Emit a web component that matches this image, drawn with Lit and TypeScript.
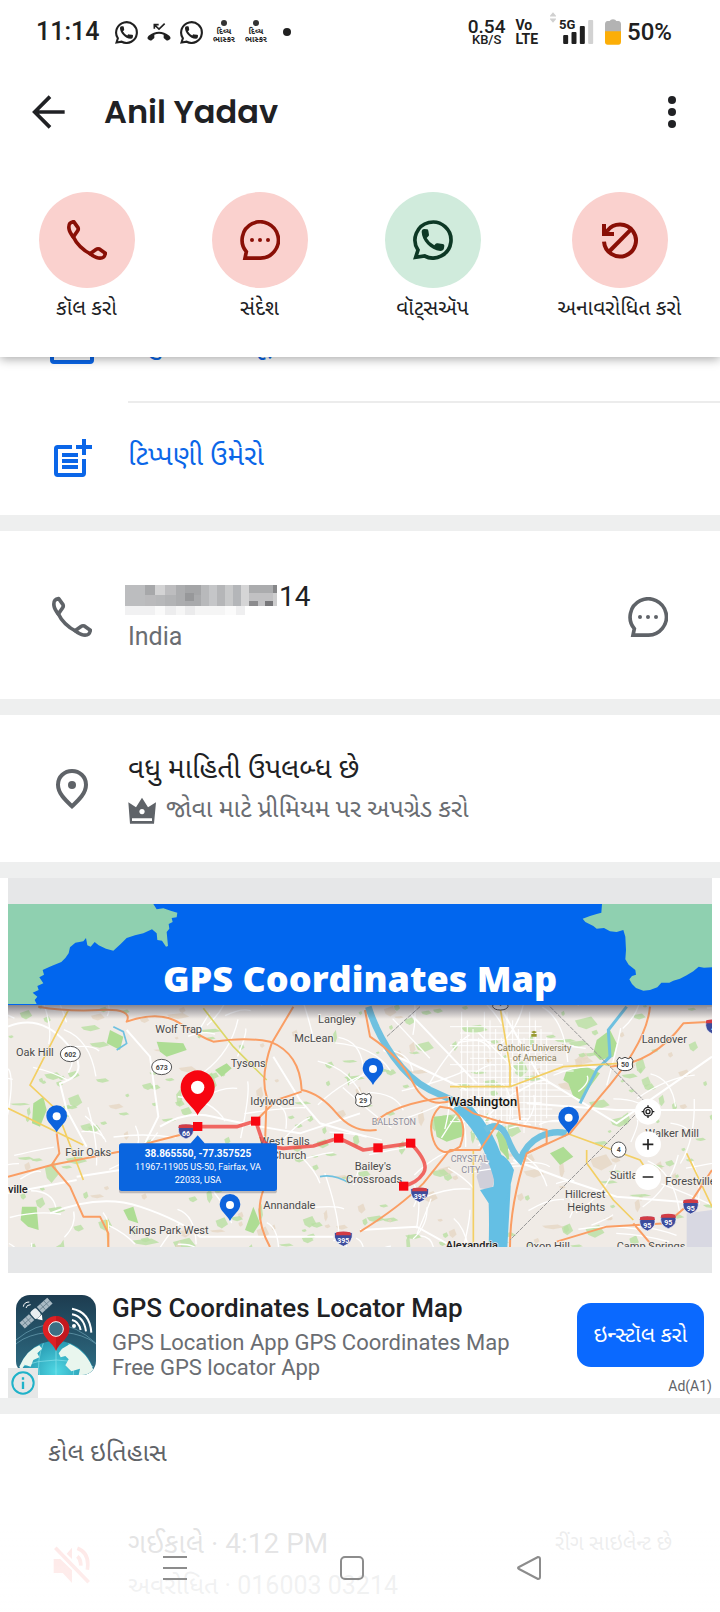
import { LitElement, html, css, svg } from "lit";
import { customElement } from "lit/decorators.js";

/* ---------- icons ---------- */

const phoneIcon = html`<svg viewBox="0 0 120 120" aria-hidden="true" fill="none" stroke="currentColor" stroke-width="11" stroke-linejoin="round">
  <path d="M6 26C4 12 8 7 20 5L33 23Q35 28 32 32L19 51C12 42 7 34 6 26Z" />
  <path d="M94 114C108 116 113 112 115 100L97 87Q92 85 88 88L69 101C78 108 86 113 94 114Z" />
  <path d="M17 47C28 70 50 92 73 103" />
</svg>`;

const messageIcon = html`<svg viewBox="0 0 120 120" aria-hidden="true" fill="none" stroke="currentColor" stroke-width="11">
  <path d="M60 114.500H15L19 95A54.500 54.500 0 1 1 60 114.500Z" />
  <g fill="currentColor" stroke="none"><circle cx="36" cy="60" r="6" /><circle cx="60" cy="60" r="6" /><circle cx="84" cy="60" r="6" /></g>
</svg>`;

const whatsappIcon = html`<svg viewBox="0 0 120 120" aria-hidden="true">
  <path d="M8 112L15 90A54 54 0 1 1 35 108Z" fill="none" stroke="currentColor" stroke-width="11" />
  <path d="M26 36Q26 27 34 27L42 28Q45 28 46 32L48 44Q48 47 46 49L41 54Q48 67 64 76L68 71Q70 69 74 70L89 72Q94 73 94 77L93 85Q91 93 82 93C52 90 27 62 26 36Z" fill="currentColor" />
</svg>`;

const unblockIcon = html`<svg viewBox="0 0 120 120" aria-hidden="true">
  <g fill="none" stroke="currentColor" stroke-width="12"><path d="M12 65A48 48 0 1 0 22 32" /><path d="M96 25L29 93" /></g>
  <path d="M6 12H18V28L28 36H42V48H6Z" fill="currentColor" />
</svg>`;

const noteIcon = html`<svg viewBox="150 261 132 132" aria-hidden="true" fill="none" stroke="currentColor" stroke-width="12">
  <path d="M216 291H173Q168 291 168 296V370Q168 375 173 375H247Q252 375 252 370V327" />
  <path d="M186 315H234M186 333H234M186 351H234M252 267V315M228 291H276" />
</svg>`;

const boxIcon = html`<svg viewBox="0 0 132 108" aria-hidden="true" fill="none" stroke="currentColor" stroke-width="12">
  <rect x="6" y="6" width="120" height="96" rx="6" />
</svg>`;

const placeIcon = html`<svg viewBox="156 174 120 126" aria-hidden="true">
  <path d="M216 183C238 183 258 200 258 224C258 250 236 270 216 289C196 270 174 250 174 224C174 200 194 183 216 183Z" fill="none" stroke="currentColor" stroke-width="12" />
  <circle cx="216" cy="225" r="12" fill="currentColor" />
</svg>`;

const crownIcon = html`<svg viewBox="390 260 84 84" aria-hidden="true">
  <path fill="currentColor" fill-rule="evenodd" d="M391 276L414 291L432 262L450 291L474 276L468 340H396ZM402 324V332H462V324ZM432 296A8 8 0 1 0 432.100 296Z" />
</svg>`;

const mutedIcon = html`<svg viewBox="0 0 120 120" aria-hidden="true" fill="none" stroke="currentColor" stroke-width="11">
  <path fill="currentColor" stroke="none" d="M5 42H25L60 76V114L32 84H5ZM60 8V42L44 26Z" />
  <path d="M10 8L110 112M76 34Q88 44 86 62M76 10Q114 24 106 74" />
</svg>`;

const missedCallIcon = html`<svg viewBox="0 0 72 54" aria-hidden="true">
  <path d="M2 48Q0 42 5 38Q36 14 67 38Q72 42 70 48L64 52Q60 54 57 51L50 45V35Q36 30 22 35V45L15 51Q12 54 8 52Z" fill="currentColor" />
  <path d="M22 17V5H35M23 6L36 18L53 2" fill="none" stroke="currentColor" stroke-width="5" />
</svg>`;

const signalIcon = html`<svg viewBox="0 0 92 78" aria-hidden="true">
  <g fill="#202020"><rect y="48" width="15" height="27" rx="3" /><rect x="25" y="39" width="15" height="36" rx="3" /><rect x="50" y="21" width="15" height="54" rx="3" /></g>
  <rect x="75" y="3" width="15" height="72" rx="3" fill="#d2d2d2" />
</svg>`;

const arrowsIcon = html`<svg viewBox="0 0 18 32" aria-hidden="true" fill="#d0d0d0"><path d="M9 0L18 11V13H0V11ZM9 32L18 21V19H0V21Z" /></svg>`;

const batteryIcon = html`<svg viewBox="0 0 48 78" aria-hidden="true">
  <path d="M14 6Q16 1 24 1Q32 1 34 6H40Q48 7 48 16V40H0V16Q0 7 8 6Z" fill="#b3b3b3" />
  <path d="M0 37H48V68Q48 77 40 77H8Q0 77 0 68Z" fill="#fcae07" />
</svg>`;

/* ---------- map artwork ---------- */

function random(seed: number) {
  let s = seed;
  return () => {
    s = (s * 16807) % 2147483647;
    return s / 2147483647;
  };
}

function patches() {
  const r = random(77);
  const out = [];
  for (let i = 0; i < 300; i++) {
    const x = 24 + r() * 2112;
    const y = 405 + r() * 726;
    const w = 8 + r() * r() * 55;
    const h = 6 + r() * r() * 44;
    const tint = r() > 0.3 ? "#b9e0a2" : "#e6d7c4";
    out.push(svg`<path fill=${tint} opacity=".8" d="M${x} ${y}l${w} ${-h * 0.4}l${w * 0.4} ${h * 0.8}l${-w * 0.7} ${h * 0.5}l${-w * 0.5} ${-h * 0.3}z" />`);
  }
  return out;
}

function streets() {
  const r = random(4242);
  const out = [];
  for (let i = 0; i < 130; i++) {
    const x = 24 + r() * 2112;
    const y = 405 + r() * 726;
    const a = r() * 6.28;
    const l = 50 + r() * 150;
    const dx = Math.cos(a) * l;
    const dy = Math.sin(a) * l;
    out.push(svg`<path d="M${x} ${y}q${dx * 0.6 + 20} ${dy * 0.3 - 14} ${dx} ${dy}" />`);
  }
  return out;
}

function downtown() {
  const out = [];
  for (let i = 0; i < 16; i++) {
    out.push(svg`<path d="M${1385 + i * 17} ${425 + (i % 4) * 26}V${745 + (i % 3) * 22}" />`);
    out.push(svg`<path d="M${1350 + (i % 3) * 30} ${470 + i * 19}H${1625 + (i % 4) * 32}" />`);
  }
  return out;
}

const bluePin = (x: number, y: number) => svg`<g transform="translate(${x} ${y})">
  <path d="M0 0C-10 -20 -31 -30 -31 -50A31 31 0 0 1 31 -50C31 -30 10 -20 0 0Z" fill="#0d63dd" /><circle cy="-48" r="12" fill="#fff" /></g>`;

const interstate = (x: number, y: number, n: string) => svg`<g transform="translate(${x} ${y})">
  <path d="M-${n.length > 2 ? 27 : 21} -18Q0 -24 ${n.length > 2 ? 27 : 21} -18Q30 12 0 23Q-30 12 -${n.length > 2 ? 27 : 21} -18Z" fill="#3d4c9c" stroke="#fff" stroke-width="2" />
  <path d="M-21 -19Q0 -24 21 -19L23 -10H-23Z" fill="#d23c45" />
  <text class="shield light" y="13">${n}</text></g>`;

const route = (x: number, y: number, n: string, rx = 30) => svg`<g transform="translate(${x} ${y})">
  <ellipse rx=${rx} ry="23" fill="#fff" stroke="#555" stroke-width="3" /><text class="shield" y="8">${n}</text></g>`;

const highway = (x: number, y: number, n: string) => svg`<g transform="translate(${x} ${y})">
  <path d="M-18 -20L-10 -16L0 -20L10 -16L18 -20L24 -10Q20 0 23 10Q18 20 0 20Q-18 20 -23 10Q-20 0 -24 -10Z" fill="#fff" stroke="#444" stroke-width="3" /><text class="shield" y="9">${n}</text></g>`;

const places: [number, number, string, string?][] = [
  [466, 490, "Wolf Trap"], [48, 557, "Oak Hill"], [954, 459, "Langley"], [883, 517, "McLean"],
  [692, 591, "Tysons"], [751, 705, "Idylwood"], [196, 858, "Fair Oaks"], [778, 825, "West Falls"],
  [815, 866, "Church"], [790, 1017, "Annandale"], [386, 1093, "Kings Park West"],
  [1064, 901, "Bailey's"], [1038, 940, "Crossroads"], [1925, 518, "Landover"],
  [1936, 800, "Walker Mill"], [1830, 927, "Suitland"], [1996, 945, "Forestville"],
  [1695, 984, "Hillcrest"], [1702, 1023, "Heights"], [1578, 1141, "Oxon Hill"], [1850, 1141, "Camp Springs"],
  [24, 968, "ville", "strong"], [1345, 707, "Washington", "city"], [1337, 1136, "Alexandria", "strong"],
  [1115, 766, "BALLSTON", "area"], [1352, 877, "CRYSTAL", "area"], [1384, 908, "CITY", "area"],
  [1491, 542, "Catholic University", "poi"], [1538, 574, "of America", "poi"],
];

@customElement("ad-map")
class AdMap extends LitElement {
  static styles = css`
    :host { display: block; background: #e6e7e8; }
    svg { display: block; width: 100%; height: auto; }
    text { font-family: Roboto, sans-serif; fill: #4a4a4a; }
    .place { font-size: 33px; stroke: #f5f1ec; stroke-width: 4px; paint-order: stroke; }
    .strong { font-weight: 500; fill: #222; }
    .city { font-size: 39px; font-weight: 500; fill: #111; }
    .area { font-size: 27px; fill: #8d8d9b; }
    .poi { font-size: 27px; fill: #857a55; }
    .shield { font-size: 21px; font-weight: 700; text-anchor: middle; }
    .light { fill: #fff; }
    .headline { font-family: "Open Sans", sans-serif; font-size: 108px; font-weight: 800; fill: #fff; text-anchor: middle; }
    .tip { font-size: 27px; fill: #fff; text-anchor: middle; }
    .coords { font-size: 30px; font-weight: 700; }
  `;

  render() {
    return html`<svg viewBox="24 24 2112 1185" role="img" aria-label="GPS Coordinates Map">
      <defs>
        <clipPath id="area"><rect x="24" y="405" width="2112" height="726" /></clipPath>
        <linearGradient id="shade" x1="0" y1="0" x2="0" y2="1"><stop offset="0" stop-color="#334" stop-opacity=".55" /><stop offset="1" stop-color="#334" stop-opacity="0" /></linearGradient>
      </defs>
      <g clip-path="url(#area)">
        <rect x="24" y="405" width="2112" height="726" fill="#f0ebe6" />
        ${patches()}
        <g fill="#aedd94">
          <path d="M1700 600L1760 590L1800 610L1770 650L1745 690L1720 680L1705 640L1690 630Z" />
          <path d="M1790 510L1830 480L1850 520L1840 560L1800 570L1780 550Z" />
          <path d="M100 700L130 680L140 720L120 770L96 760Z" /><path d="M66 1010L110 1010L116 1080L84 1070L62 1050Z" />
          <path d="M1300 740L1350 735L1390 760L1385 800L1340 815L1310 800Z" /><path d="M1490 790Q1520 800 1528 870L1500 840Z" />
          <path d="M1650 850L1690 830L1720 860L1680 885Z" /><path d="M760 1010L780 1060L760 1090L735 1080Z" />
          <path d="M645 600L680 580L695 595L665 620Z" /><path d="M330 480L370 500L360 540L320 520Z" />
          <path d="M470 515L550 520L560 540L500 560L480 545Z" /><path d="M370 1020L400 1010L415 1060L385 1050Z" />
        </g>
        <path d="M2060 1030L2136 1020V1131H2060Z" fill="#d8d8e2" /><path d="M1450 850L1480 860L1485 920L1475 960L1440 955L1430 920Z" fill="#d0cfd9" />
        <g fill="none" stroke="#fff" stroke-width="4">${streets()}</g>
        <g fill="none" stroke="#fff" stroke-width="3">${downtown()}</g>
        <g fill="none" stroke="#fff" stroke-width="6">
          <path d="M24 470Q120 430 200 520T180 640L200 720L260 830" /><path d="M380 480L450 560L475 740L430 830" />
          <path d="M150 1030Q300 970 420 1010T600 1100H1000" /><path d="M480 770Q560 720 640 740T900 790L1080 730" />
          <path d="M230 920L360 900M24 970L230 930" /><path d="M820 560L900 690L960 760L1100 800" />
          <path d="M1080 1080L1250 1070L1340 1120" /><path d="M1580 700L1850 720H2136" /><path d="M1540 870L1700 930L1850 980L2100 1000" />
          <path d="M1500 410L1620 620L1850 760L2136 560" /><path d="M1230 430L1430 640M1150 540L1400 660" />
        </g>
        <g fill="none" stroke="#6fc1e0">
          <path d="M1105 410Q1130 490 1180 560T1290 660L1400 710" stroke-width="20" />
          <path d="M1375 700Q1440 760 1470 830T1510 950L1500 1131" stroke-width="44" stroke="#64bfe4" />
          <path d="M1455 780Q1500 750 1520 800T1560 870Q1580 820 1620 800T1700 790" stroke-width="19" />
          <path d="M1740 700L1790 600L1830 560L1825 480L1880 410" stroke-width="9" />
          <path d="M340 470L370 485L380 520L350 540M960 920Q1000 910 1050 940" stroke-width="5" />
        </g>
        <path d="M1462 860Q1510 830 1542 900Q1530 960 1510 1010L1515 1131H1466Q1468 1060 1466 1000L1440 960L1480 950Q1488 910 1462 860Z" fill="#64bfe4" />
        <path d="M1495 782Q1532 810 1524 872Q1502 830 1488 796Z" fill="#aedd94" />
        <g fill="none" stroke="#f3cf63" stroke-width="5">
          <path d="M205 420L90 645L170 720L250 930M24 715L250 825" /><path d="M610 415L700 530L800 630" stroke="#dcd767" />
          <path d="M1500 410L1530 590L1530 650H1350M1530 650L1690 590L1860 580" /><path d="M1700 790L1920 870L1940 900M1760 840V880L1840 990L1900 1050" />
          <path d="M1420 840V1131M320 1050L325 1131M2060 850L2136 1010" />
        </g>
        <g fill="none" stroke="#fa9e64" stroke-width="6" stroke-linejoin="round">
          <path d="M115 410Q200 425 300 420T380 455Q480 420 540 460T640 515Q740 500 810 515Q900 550 905 660Q960 670 1010 730T1130 780" />
          <path d="M880 410L815 520Q780 620 800 680L790 960Q760 1040 810 1131M770 750L830 690L905 665" />
          <path d="M24 920L155 885L357 845L460 815L560 790" /><path d="M170 790L178 850L155 885L210 950L250 1040H300L325 1090V1131" />
          <path d="M1095 420L1110 500Q1200 560 1240 640T1360 690L1420 730L1500 755L1640 780V820L1580 850" />
          <path d="M1320 710Q1280 750 1300 810T1380 830Q1410 750 1350 715ZM1120 760Q1180 700 1350 680" />
          <path d="M1080 1085Q1200 1010 1270 940L1350 840H1440L1500 750M1550 650L1560 750" />
          <path d="M1580 850Q1530 1000 1530 1131M1580 850L1710 790L1800 680Q1940 520 1950 410" />
          <path d="M1830 590Q1960 580 2050 460L2136 455M1670 1115L1820 1070L2000 1060L2070 1000L2136 900M1900 1060L1960 1131" />
        </g>
        <g stroke="#999" stroke-width="3" stroke-dasharray="14 3" fill="none"><path d="M1650 410L1940 700L1530 1110M1260 410L1160 500" /></g>
        ${highway(1501, 400, "1")}
        <rect x="24" y="405" width="2112" height="42" fill="url(#shade)" />
        ${places.map(([x, y, name, kind]) => svg`<text class="place ${kind ?? ""}" x=${x} y=${y}>${name}</text>`)}
        ${route(211, 552, "602")}${route(485, 591, "673")}${route(1856, 839, "4", 22)}
        ${highway(1090, 690, "29")}${highway(1875, 582, "50")}
        ${interstate(558, 784, "66")}${interstate(1030, 1106, "395")}${interstate(1259, 974, "395")}
        ${interstate(1942, 1060, "95")}${interstate(2005, 1053, "95")}${interstate(2072, 1009, "95")}${interstate(2140, 470, "4")}
        <path d="M1593 486L1602 482L1611 486L1602 491ZM1594 492H1610V500H1594Z" fill="#999a32" />
        <path d="M593 770H710L767 753L783 800Q790 830 850 835L940 828L1016 804L1090 840L1134 834L1232 820Q1290 880 1270 910T1211 948" fill="none" stroke="#f04540" stroke-width="11" opacity=".8" stroke-linejoin="round" />
        <g fill="#f80510"><rect x="579" y="756" width="28" height="27" /><rect x="753" y="740" width="28" height="27" /><rect x="1002" y="791" width="28" height="27" /><rect x="1120" y="820" width="28" height="27" /><rect x="1218" y="806" width="28" height="27" /><rect x="1197" y="935" width="28" height="27" /></g>
        ${bluePin(170, 787)}${bluePin(690, 1053)}${bluePin(1119, 645)}${bluePin(1706, 791)}
        <path d="M593 736C580 708 542 690 542 652A51 51 0 0 1 644 652C644 690 606 708 593 736Z" fill="#f70510" /><circle cx="593" cy="652" r="20" fill="#fff" />
        <rect x="357" y="824" width="474" height="146" rx="8" fill="#223" opacity=".25" />
        <path d="M365 820H572L593 796L614 820H823Q831 820 831 828V955Q831 963 823 963H365Q357 963 357 955V828Q357 820 365 820Z" fill="#0a65df" />
        <text class="tip coords" x="594" y="861">38.865550, -77.357525</text>
        <text class="tip" x="594" y="900">11967-11905 US-50, Fairfax, VA</text>
        <text class="tip" x="594" y="939">22033, USA</text>
        <g fill="#fff"><circle cx="1944" cy="725" r="39" /><circle cx="1944" cy="823" r="39" /><circle cx="1944" cy="921" r="39" /></g>
        <g fill="none" stroke="#222" stroke-width="5"><path d="M1928 823H1960M1944 807V839M1928 921H1960" /><g stroke-width="4"><circle cx="1944" cy="725" r="13" /><circle cx="1944" cy="725" r="6" /><path d="M1944 706V713M1944 737V744M1925 725H1932M1956 725H1963" /></g></g>
      </g>
      <rect x="24" y="102" width="2112" height="303" fill="#0166ee" />
      <g fill="#8fd0b0">
        <path d="M24 102H460L470 118L490 115L512 122L532 128L530 142L515 144L518 156L506 162L508 176L500 186L504 228L498 230L486 212L472 210L470 190L456 178L430 190L405 196L380 204L362 222L340 242L318 236L296 226L284 216L272 230L262 226L258 204L250 214L226 218L210 232L206 250L196 264L184 276L160 286L146 292L128 300L132 314L118 322L130 340L112 348L116 360L98 368L112 380L104 390L110 402H24Z" />
        <path d="M1806 102H2136V292L2112 293L2096 290L2080 304L2060 316L2040 326L2020 332L2008 338L1984 338L1972 352L1950 360L1930 362L1908 354L1896 342L1888 328L1896 318L1908 314L1906 300L1886 284L1876 268L1878 240L1876 200L1870 180L1850 186L1830 184L1812 174L1790 176L1780 168L1756 156L1748 146L1770 138L1790 132L1804 128Z" />
      </g>
      <text class="headline" x="1080" y="366">GPS Coordinates Map</text>
    </svg>`;
  }
}

const appLogo = html`<svg viewBox="48 75 240 240" role="img" aria-label="GPS Coordinates Locator Map">
  <defs><linearGradient id="sky" x1="0" y1="0" x2="0" y2="1"><stop offset="0" stop-color="#1d3c50" /><stop offset="1" stop-color="#2e6e85" /></linearGradient>
    <radialGradient id="globe" cx=".5" cy=".4" r=".6"><stop offset="0" stop-color="#4fd8e4" /><stop offset="1" stop-color="#147a98" /></radialGradient></defs>
  <rect x="48" y="75" width="240" height="240" fill="url(#sky)" />
  <g fill="none" stroke="#6fa6b8" stroke-width="2"><ellipse cx="168" cy="260" rx="140" ry="74" /><path d="M48 210Q168 110 288 220" /></g>
  <circle cx="168" cy="328" r="116" fill="url(#globe)" />
  <g fill="none" stroke="#8be4ec" stroke-width="2"><path d="M168 212V315M130 220Q110 270 118 315M206 220Q226 270 220 315M60 290Q168 250 280 290" /></g>
  <path fill="#e9f6ee" d="M58 290Q80 240 118 226L126 236L112 250L118 262L100 270L92 290L74 284L64 300ZM186 236L210 222Q262 246 280 300L276 315H236L240 296L214 304L196 286L206 268L196 258L182 262L176 250Z" />
  <path d="M168 243C158 216 128 206 128 177A40 39 0 0 1 208 177C208 206 178 216 168 243Z" fill="#dd2023" />
  <path d="M168 243C178 216 208 206 208 177A40 39 0 0 0 168 138Z" fill="#b3141b" opacity=".6" />
  <circle cx="168" cy="177" r="22" fill="#3c6f84" stroke="#fff" stroke-width="3" />
  <g transform="rotate(-42 106 130)"><rect x="52" y="119" width="38" height="24" fill="#a9bac4" /><rect x="122" y="119" width="42" height="24" fill="#a9bac4" /><rect x="94" y="117" width="24" height="28" rx="7" fill="#e8eef1" /><path d="M52 131H90M122 131H164M64 119V143M77 119V143M136 119V143M150 119V143" stroke="#5c7684" stroke-width="2" /><path d="M98 146H118L108 160Z" fill="#fff" /></g>
  <g fill="none" stroke="#fff" stroke-width="6"><path d="M216 116Q270 126 274 188M216 133Q252 140 258 184M216 150Q236 154 242 180" /><path d="M70 110Q72 96 88 96M78 114Q80 104 92 104" stroke-width="3" /></g>
  <circle cx="222" cy="168" r="6" fill="#fff" />
</svg>`;

/* ---------- redacted part of the number ---------- */

const mosaic: [number, number, number, number, string][] = [
  [0, 0, 60, 62, "#bcbdbf"], [60, 0, 30, 30, "#a7a8aa"], [90, 0, 30, 30, "#d3d3d4"], [120, 0, 34, 30, "#bdbdbf"],
  [60, 30, 32, 32, "#bababc"], [92, 30, 28, 32, "#b7b8ba"], [120, 30, 34, 32, "#b2b3b5"], [154, 0, 26, 62, "#acadaf"],
  [180, 0, 48, 30, "#a4a5a7"], [180, 30, 48, 32, "#a9aaac"], [180, 24, 26, 24, "#97989a"], [228, 0, 24, 62, "#b8b9bb"],
  [252, 0, 24, 62, "#c5c6c8"], [276, 0, 24, 62, "#b5b6b8"], [300, 0, 24, 62, "#c8c9ca"], [324, 0, 24, 62, "#b4b6b9"],
  [348, 0, 24, 62, "#d5d5d6"], [372, 0, 84, 24, "#abacae"], [372, 24, 72, 24, "#c1c1c3"], [372, 48, 26, 14, "#8c8c8e"],
  [398, 48, 22, 14, "#c2c2c4"], [420, 48, 24, 14, "#77777a"], [444, 0, 12, 24, "#868789"], [444, 24, 12, 38, "#cdcdce"],
  [0, 62, 90, 28, "#f1f1f2"], [90, 62, 30, 28, "#fafafa"], [120, 62, 34, 28, "#ededee"], [154, 62, 26, 28, "#f6f6f6"],
  [180, 62, 30, 28, "#ebebec"], [210, 62, 90, 28, "#f5f5f5"], [300, 62, 32, 28, "#fbfbfb"], [332, 62, 28, 28, "#efeff0"],
];

const actions = [
  { label: "કૉલ કરો", icon: phoneIcon, tone: "" },
  { label: "સંદેશ", icon: messageIcon, tone: "" },
  { label: "વૉટ્સઍપ", icon: whatsappIcon, tone: "green" },
  { label: "અનાવરોધિત કરો", icon: unblockIcon, tone: "" },
];

@customElement("app-root")
class AppRoot extends LitElement {
  static styles = css`
    :host { display: block; min-height: 100vh; overflow: hidden; background: #fff; color: #202124; font-family: Roboto, "Noto Sans Gujarati", "Lohit Gujarati", sans-serif; font-size: 25px; line-height: 40px; }
    * { box-sizing: border-box; }
    button { margin: 0; padding: 0; border: 0; background: none; color: inherit; font: inherit; text-align: left; cursor: pointer; }
    svg { display: block; }
    h1, h2, p { margin: 0; }

    .top { position: relative; z-index: 1; background: #fff; padding-bottom: 28px; box-shadow: 0 2px 10px rgba(0, 0, 0, .35); }
    .status { display: flex; align-items: center; height: 64px; padding: 0 48px 0 36px; font-weight: 500; color: #202020; }
    .notes { display: flex; align-items: center; gap: 9px; margin-left: 16px; flex: 1; }
    .notes .chat, .notes .chat svg { width: 23px; height: 23px; }
    .notes .missed svg { width: 24px; height: 18px; }
    .paper { width: 23px; font-size: 8px; line-height: 8px; font-weight: 700; text-align: center; white-space: nowrap; display: flex; flex-direction: column; align-items: center; }
    .paper::before { content: ""; width: 6px; height: 6px; border-radius: 50%; background: #333; margin-bottom: 2px; }
    .more { width: 8px; height: 8px; border-radius: 50%; background: #202020; margin-left: 7px; }
    .radio { display: flex; align-items: center; }
    .percent { font-size: 24px; }
    .speed, .lte { font-size: 13px; line-height: 12px; text-align: center; }
    .speed b { display: block; font-size: 19px; line-height: 15px; font-weight: 500; }
    .lte { margin: 0 12px 0 10px; text-align: left; font-weight: 700; font-size: 14px; line-height: 14px; }
    .arrows svg { width: 6px; height: 11px; }
    .arrows { align-self: stretch; }
    .net { position: relative; margin: 0 11px 0 2px; }
    .net svg { width: 31px; height: 26px; }
    .net span { position: absolute; top: 0; left: 1px; font-size: 13px; line-height: 12px; font-weight: 700; }
    .signal { padding-left: 5px; }
    .battery svg { width: 16px; height: 26px; }
    .battery { margin-right: 6px; }

    .bar { display: flex; align-items: center; height: 96px; padding: 0 31px 0 32px; }
    .bar svg { width: 34px; height: 34px; }
    .bar h1 { flex: 1; margin-left: 38px; font: 600 32px/48px Poppins, Inter, sans-serif; }

    .actions { display: grid; grid-template-columns: 173fr 173fr 173fr 201fr; padding-top: 32px; }
    .action { display: flex; flex-direction: column; align-items: center; font-size: 21px; line-height: 41px; white-space: nowrap; }
    .disc { display: grid; place-items: center; width: 96px; height: 96px; border-radius: 50%; background: #fad1ce; color: #890f06; }
    .disc.green { background: #d0ebdc; color: #0d3825; }
    .disc svg { width: 40px; height: 40px; }

    .row { display: flex; align-items: center; width: 100%; padding: 0 52px 0 48px; }
    .glyph { display: grid; place-items: center; width: 48px; margin-right: 32px; color: #5f6368; flex: none; }
    .glyph svg { width: 40px; height: 42px; }
    .link { height: 112px; color: #0b66e8; font-size: 28px; }
    .link .glyph { color: inherit; }
    .link .glyph svg { width: 44px; height: 44px; }
    .link .label { padding-bottom: 6px; }
    .tucked { margin-top: -67px; height: 111px; }
    .tucked .glyph svg { height: 36px; }
    .rule { height: 2px; margin: 0 0 0 128px; border: 0; background: #ececec; }
    .band { border-top: 16px solid #eeefef; }
    .grow { flex: 1; min-width: 0; }
    .grey { color: #6a6d72; }
    .number { display: flex; align-items: center; font-size: 28px; }
    .number svg { width: 152px; height: 30px; margin: 6px 2px 0 -3px; }
    .contact { padding-top: 46px; padding-bottom: 42px; }
    .more-info { padding-top: 34px; padding-bottom: 33px; }
    .big { font-size: 28px; }
    .premium { display: flex; align-items: center; gap: 10px; }
    .premium svg { width: 28px; height: 28px; color: #5f6368; margin-top: 4px; }
    .round svg { width: 40px; height: 40px; color: #5f6368; }

    .ad { position: relative; padding-bottom: 18px; }
    .ad ad-map { margin: 0 8px; }
    .promo { display: flex; align-items: flex-start; padding: 19px 16px 0; gap: 16px; }
    .logo svg { width: 80px; height: 80px; margin-top: 3px; border-radius: 14px; }
    .promo h2 { font-size: 26px; line-height: 32px; font-weight: 500; white-space: nowrap; }
    .promo p { max-width: 420px; padding-top: 6px; font-size: 22px; line-height: 25px; color: #6a6d72; }
    .install { width: 127px; height: 64px; margin-top: 11px; border-radius: 14px; background: #0a69ff; color: #fff; font-size: 22px; text-align: center; white-space: nowrap; }
    .info { position: absolute; left: 8px; bottom: 0; display: grid; place-items: center; width: 30px; height: 30px; background: #e6e7e7; }
    .info svg { width: 24px; height: 24px; }
    .mark { position: absolute; right: 8px; bottom: 2px; font-size: 14px; line-height: 20px; color: #5f6368; }

    .history h2 { padding: 19px 48px 0; font-size: 25px; font-weight: 400; color: #5f6368; }
    .call { padding-top: 50px; padding-right: 48px; }
    .call .glyph { color: #f0433a; }
    .call .silent { align-self: flex-start; font-size: 21px; color: #6a6d72; }
    .call .grow { line-height: 42px; }
    .line { white-space: nowrap; }

    .nav { position: fixed; z-index: 2; left: 0; right: 0; bottom: 0; display: grid; grid-template-columns: 86fr 177fr 177fr 177fr 103fr; height: 92px; align-items: center; background: linear-gradient(rgba(255, 255, 255, .87), rgba(255, 255, 255, .92)); }
    .nav button { display: grid; place-items: center; height: 92px; padding-top: 4px; }
    .nav svg { width: 26px; height: 26px; }
    .nav button:first-child { grid-column: 2; }
  `;

  render() {
    return html`
      <header class="top">
        <div class="status">
          <span>11:14</span>
          <div class="notes">
            <span class="chat">${whatsappIcon}</span>
            <span class="missed">${missedCallIcon}</span>
            <span class="chat">${whatsappIcon}</span>
            <span class="paper"><span>દિવ્ય</span><span>ભાસ્કર</span></span>
            <span class="paper"><span>દિવ્ય</span><span>ભાસ્કર</span></span>
            <span class="more"></span>
          </div>
          <div class="radio">
            <div class="speed"><b>0.54</b>KB/S</div>
            <div class="lte">Vo<br />LTE</div>
            <span class="arrows">${arrowsIcon}</span>
            <div class="net"><span>5G</span><div class="signal">${signalIcon}</div></div>
            <span class="battery">${batteryIcon}</span>
            <span class="percent">50%</span>
          </div>
        </div>
        <div class="bar">
          <button aria-label="Back"><svg viewBox="0 0 102 102"><path d="M98 51H10M54 5L8 51L54 97" fill="none" stroke="#202124" stroke-width="11" /></svg></button>
          <h1>Anil Yadav</h1>
          <button aria-label="Menu"><svg viewBox="0 0 102 102" fill="#202124"><circle cx="51" cy="15" r="12" /><circle cx="51" cy="51" r="12" /><circle cx="51" cy="87" r="12" /></svg></button>
        </div>
        <div class="actions">
          ${actions.map((a) => html`<button class="action"><span class="disc ${a.tone}">${a.icon}</span><span>${a.label}</span></button>`)}
        </div>
      </header>

      <main>
        <button class="row link tucked"><span class="glyph">${boxIcon}</span><span class="label">વધુ માહિતી સૂચવો</span></button>
        <hr class="rule" />
        <button class="row link"><span class="glyph">${noteIcon}</span><span class="label">ટિપ્પણી ઉમેરો</span></button>

        <section class="band row contact">
          <span class="glyph">${phoneIcon}</span>
          <div class="grow">
            <p class="number"><svg viewBox="0 0 456 90" aria-hidden="true" shape-rendering="crispEdges">${mosaic.map(([x, y, w, h, c]) => svg`<rect x=${x} y=${y} width=${w} height=${h} fill=${c} />`)}</svg>14</p>
            <p class="grey">India</p>
          </div>
          <button class="round" aria-label="સંદેશ">${messageIcon}</button>
        </section>

        <section class="band row more-info">
          <span class="glyph">${placeIcon}</span>
          <div class="grow">
            <p class="big">વધુ માહિતી ઉપલબ્ધ છે</p>
            <p class="grey premium">${crownIcon}<span>જોવા માટે પ્રીમિયમ પર અપગ્રેડ કરો</span></p>
          </div>
        </section>

        <section class="band ad">
          <ad-map></ad-map>
          <div class="promo">
            <span class="logo">${appLogo}</span>
            <div class="grow"><h2>GPS Coordinates Locator Map</h2><p>GPS Location App GPS Coordinates Map Free GPS locator App</p></div>
            <button class="install">ઇન્સ્ટૉલ કરો</button>
          </div>
          <button class="info" aria-label="Ad info"><svg viewBox="0 0 72 72" fill="none" stroke="#1fb2c9"><circle cx="36" cy="36" r="32" stroke-width="6" /><path d="M36 32V54M36 19V26" stroke-width="7" /></svg></button>
          <span class="mark">Ad(A1)</span>
        </section>

        <section class="band history">
          <h2>કોલ ઇતિહાસ</h2>
          <div class="row call">
            <span class="glyph">${mutedIcon}</span>
            <div class="grow"><p class="line number">ગઈકાલે · 4:12 PM</p><p class="line grey">અવરોધિત · 016003 03214</p></div>
            <span class="silent">રીંગ સાઇલેન્ટ છે</span>
          </div>
        </section>
      </main>

      <nav class="nav" aria-label="System">
        <button aria-label="Recents"><svg viewBox="0 0 26 26" stroke="#8c8c8c" stroke-width="2"><path d="M1 2H25M1 13H25M1 24H25" /></svg></button>
        <button aria-label="Home"><svg viewBox="0 0 26 26" fill="none" stroke="#8c8c8c" stroke-width="2"><rect x="2" y="2" width="22" height="22" rx="4" /></svg></button>
        <button aria-label="Back"><svg viewBox="0 0 26 26" fill="none" stroke="#8c8c8c" stroke-width="2" stroke-linejoin="round"><path d="M22 2Q24 2 24 4V22Q24 24 22 24L3 14Q1 13 3 12Z" /></svg></button>
      </nav>
    `;
  }
}
